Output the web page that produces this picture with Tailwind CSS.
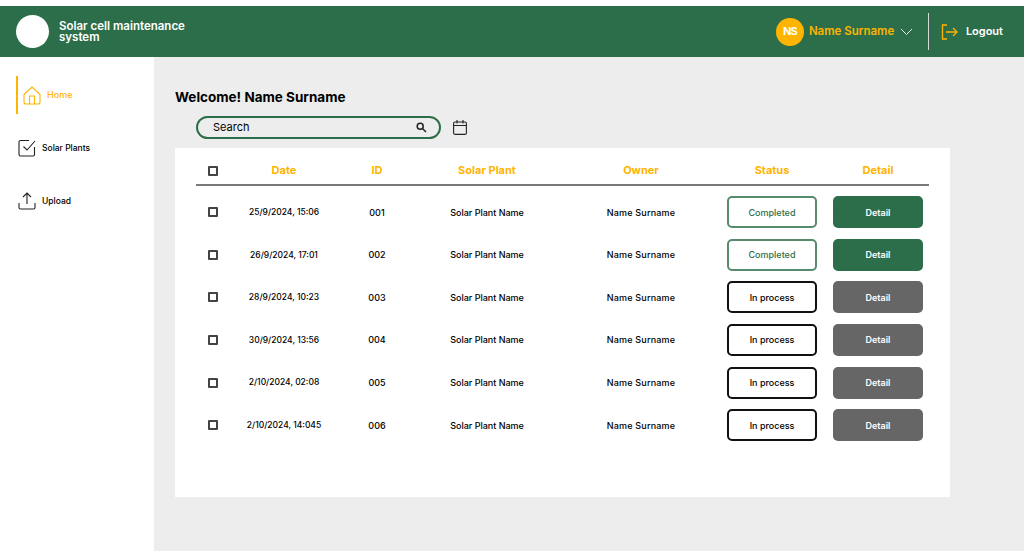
<!DOCTYPE html>
<html lang="en">
<head>
  <meta charset="UTF-8" />
  <title>Solar cell maintenance system</title>
  <meta name="viewport" content="width=device-width, initial-scale=1.0" />
  <script src="https://cdn.jsdelivr.net/npm/@tailwindcss/browser@4"></script>
</head>
<body class="bg-white font-['Inter','Liberation_Sans',sans-serif] text-black">
  <div class="w-[1024px] h-[551px] overflow-hidden flex flex-col pt-[6px]">

    <!-- top bar -->
    <header class="h-[51px] shrink-0 bg-[#2d6e4a] flex items-center pl-4 text-white">
      <div class="w-[33px] h-[33px] rounded-full bg-white"></div>
      <div class="ml-[10px] w-[150px] text-[11.5px] leading-[11px] font-semibold">Solar cell maintenance system</div>
      <div class="ml-auto flex items-center">
        <div class="w-[28px] h-[28px] rounded-full bg-[#ffb400] flex items-center justify-center text-[11px] font-bold tracking-[-1px]">NS</div>
        <span class="ml-[5px] text-[11.5px] font-semibold text-[#ffb400] w-[86px] whitespace-nowrap">Name Surname</span>
        <svg class="ml-[5px]" width="13" height="8" viewBox="0 0 13 8" fill="none" stroke="#e8e8e8" stroke-width="1"><path d="M1 1l5.5 5.5L12 1" /></svg>
        <div class="ml-[15px] w-px h-[37px] bg-[#d5dcd7]"></div>
        <svg class="ml-[12px]" width="17" height="16" viewBox="0 0 17 16" fill="none" stroke="#ffb400" stroke-width="1.3"><path d="M6 1H1.500v14H6M5 8h11M12 4l4 4-4 4" /></svg>
        <span class="ml-[8px] mr-[21px] text-[11px] font-semibold">Logout</span>
      </div>
    </header>

    <div class="flex flex-1 min-h-0">
      <!-- sidebar -->
      <aside class="w-[154px] shrink-0 bg-white pt-[19px] pl-4">
        <div class="h-[38px] flex items-center border-l-2 border-[#ffb400] text-[#ffb400]">
          <svg class="ml-[5px]" width="18" height="19" viewBox="0 0 18 19" fill="none" stroke="#ffb400" stroke-width="1.1"><path d="M1 8.500L9 1l8 7.500V16a2 2 0 0 1-2 2H3a2 2 0 0 1-2-2zM6.500 18v-8h5v8" /></svg>
          <span class="ml-[6px] text-[9px] font-medium">Home</span>
        </div>
        <div class="h-[18px] mt-[25px] flex items-center">
          <svg class="ml-[2px]" width="18" height="18" viewBox="0 0 18 18" fill="none" stroke="#222" stroke-width="1.1"><path d="M16.500 8v7.500a1.500 1.500 0 0 1-1.500 1.500H2.500A1.500 1.500 0 0 1 1 15.500V3a1.500 1.500 0 0 1 1.500-1.500H11M5.500 7.500l3.500 3.500 8-9" /></svg>
          <span class="ml-[6px] text-[8.500px] font-medium whitespace-nowrap">Solar Plants</span>
        </div>
        <div class="h-[18px] mt-[35px] flex items-center">
          <svg class="ml-[2px]" width="18" height="18" viewBox="0 0 18 18" fill="none" stroke="#222" stroke-width="1.1"><path d="M1 11v4.500A1.500 1.500 0 0 0 2.500 17h13a1.500 1.500 0 0 0 1.500-1.500V11M9 12V1M5 5l4-4 4 4" /></svg>
          <span class="ml-[6px] text-[8.500px] font-medium">Upload</span>
        </div>
      </aside>

      <!-- main -->
      <main class="flex-1 bg-[#ededed] pl-[21px] pt-[32px]">
        <h1 class="text-[13.500px] leading-[16px] font-bold">Welcome! Name Surname</h1>
        <div class="mt-[11px] ml-[21px] flex items-center">
          <div class="w-[245px] h-[23px] rounded-full border-2 border-[#2d6e4a] flex items-center pl-[15px] pr-[12px] text-[11px]">
            <span>Search</span>
            <svg class="ml-auto" width="11" height="11" viewBox="0 0 11 11" fill="none" stroke="#222" stroke-width="1.500"><circle cx="4.200" cy="4.200" r="3" /><path d="M6.500 6.500L10 10" /></svg>
          </div>
          <svg class="ml-[12px]" width="14" height="15" viewBox="0 0 14 15" fill="none" stroke="#222" stroke-width="1.100"><rect x="0.600" y="2" width="12.800" height="12.400" rx="1.500" /><path d="M0.600 5.500h12.800M4 0v3.500M10 0v3.500" /></svg>
        </div>

        <!-- table card -->
        <section class="mt-[9px] w-[775px] h-[349px] bg-white pl-[21px] pt-[12px]">
          <div class="grid grid-cols-[34px_108px_78px_142px_166px_96px_116px] items-center h-[21px] text-center text-[11px] font-bold text-[#ffb400] w-[740px]">
            <span class="flex justify-center"><span class="w-[10px] h-[10px] border-2 border-[#444] rounded-[1px]"></span></span>
            <span>Date</span><span>ID</span><span>Solar Plant</span><span>Owner</span><span>Status</span><span>Detail</span>
          </div>
          <div class="mt-[3px] w-[733px] h-[2px] bg-[#7a7a7a]"></div>

          <div class="mt-[5px] w-[740px] flex flex-col text-[9px] font-medium text-center">
            <div class="grid grid-cols-[34px_108px_78px_142px_166px_96px_116px] items-center h-[42.600px]">
              <span class="flex justify-center"><span class="w-[10px] h-[10px] border-2 border-[#444] rounded-[1px]"></span></span>
              <span class="text-[8.500px]">25/9/2024, 15:06</span><span>001</span><span>Solar Plant Name</span><span class="tracking-[0.2px]">Name Surname</span>
              <span class="flex justify-center"><span class="w-[90px] h-[32px] rounded-[5px] border-2 border-[#2d6e4a]/80 text-[#2d6e4a] flex items-center justify-center">Completed</span></span>
              <span class="flex justify-center"><span class="w-[90px] h-[32px] rounded-[5px] bg-[#2d6e4a] text-white font-semibold flex items-center justify-center">Detail</span></span>
            </div>
            <div class="grid grid-cols-[34px_108px_78px_142px_166px_96px_116px] items-center h-[42.600px]">
              <span class="flex justify-center"><span class="w-[10px] h-[10px] border-2 border-[#444] rounded-[1px]"></span></span>
              <span class="text-[8.500px]">26/9/2024, 17:01</span><span>002</span><span>Solar Plant Name</span><span class="tracking-[0.2px]">Name Surname</span>
              <span class="flex justify-center"><span class="w-[90px] h-[32px] rounded-[5px] border-2 border-[#2d6e4a]/80 text-[#2d6e4a] flex items-center justify-center">Completed</span></span>
              <span class="flex justify-center"><span class="w-[90px] h-[32px] rounded-[5px] bg-[#2d6e4a] text-white font-semibold flex items-center justify-center">Detail</span></span>
            </div>
            <div class="grid grid-cols-[34px_108px_78px_142px_166px_96px_116px] items-center h-[42.600px]">
              <span class="flex justify-center"><span class="w-[10px] h-[10px] border-2 border-[#444] rounded-[1px]"></span></span>
              <span class="text-[8.500px]">28/9/2024, 10:23</span><span>003</span><span>Solar Plant Name</span><span class="tracking-[0.2px]">Name Surname</span>
              <span class="flex justify-center"><span class="w-[90px] h-[32px] rounded-[5px] border-2 border-[#111] flex items-center justify-center">In process</span></span>
              <span class="flex justify-center"><span class="w-[90px] h-[32px] rounded-[5px] bg-[#666666] text-white font-semibold flex items-center justify-center">Detail</span></span>
            </div>
            <div class="grid grid-cols-[34px_108px_78px_142px_166px_96px_116px] items-center h-[42.600px]">
              <span class="flex justify-center"><span class="w-[10px] h-[10px] border-2 border-[#444] rounded-[1px]"></span></span>
              <span class="text-[8.500px]">30/9/2024, 13:56</span><span>004</span><span>Solar Plant Name</span><span class="tracking-[0.2px]">Name Surname</span>
              <span class="flex justify-center"><span class="w-[90px] h-[32px] rounded-[5px] border-2 border-[#111] flex items-center justify-center">In process</span></span>
              <span class="flex justify-center"><span class="w-[90px] h-[32px] rounded-[5px] bg-[#666666] text-white font-semibold flex items-center justify-center">Detail</span></span>
            </div>
            <div class="grid grid-cols-[34px_108px_78px_142px_166px_96px_116px] items-center h-[42.600px]">
              <span class="flex justify-center"><span class="w-[10px] h-[10px] border-2 border-[#444] rounded-[1px]"></span></span>
              <span class="text-[8.500px]">2/10/2024, 02:08</span><span>005</span><span>Solar Plant Name</span><span class="tracking-[0.2px]">Name Surname</span>
              <span class="flex justify-center"><span class="w-[90px] h-[32px] rounded-[5px] border-2 border-[#111] flex items-center justify-center">In process</span></span>
              <span class="flex justify-center"><span class="w-[90px] h-[32px] rounded-[5px] bg-[#666666] text-white font-semibold flex items-center justify-center">Detail</span></span>
            </div>
            <div class="grid grid-cols-[34px_108px_78px_142px_166px_96px_116px] items-center h-[42.600px]">
              <span class="flex justify-center"><span class="w-[10px] h-[10px] border-2 border-[#444] rounded-[1px]"></span></span>
              <span class="text-[8.500px]">2/10/2024, 14:045</span><span>006</span><span>Solar Plant Name</span><span class="tracking-[0.2px]">Name Surname</span>
              <span class="flex justify-center"><span class="w-[90px] h-[32px] rounded-[5px] border-2 border-[#111] flex items-center justify-center">In process</span></span>
              <span class="flex justify-center"><span class="w-[90px] h-[32px] rounded-[5px] bg-[#666666] text-white font-semibold flex items-center justify-center">Detail</span></span>
            </div>
          </div>
        </section>
      </main>
    </div>
  </div>
</body>
</html>
